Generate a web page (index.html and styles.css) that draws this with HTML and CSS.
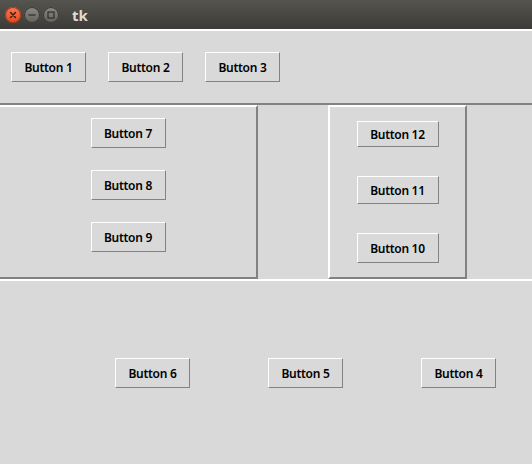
FILE: index.html
```html
<!DOCTYPE html>
<html lang="en">
<head>
    <meta charset="UTF-8">
    <meta name="viewport" content="width=device-width, initial-scale=1.0">
    <title>tk</title>
    <link rel="stylesheet" href="styles.css">
</head>
<body>
    <div class="titlebar">
        <span class="wbtn close">
            <svg width="16" height="16" viewBox="0 0 16 16">
                <path d="M5.5 5.5 L10.5 10.5 M10.5 5.5 L5.5 10.5" stroke="#3a1a10" stroke-width="1.4" stroke-linecap="round"/>
            </svg>
        </span>
        <span class="wbtn">
            <svg width="16" height="16" viewBox="0 0 16 16">
                <path d="M4.5 8 H11.5" stroke="#2e2d2a" stroke-width="1.2"/>
            </svg>
        </span>
        <span class="wbtn">
            <svg width="16" height="16" viewBox="0 0 16 16">
                <rect x="5" y="5" width="6" height="6" fill="none" stroke="#2e2d2a" stroke-width="1.2"/>
            </svg>
        </span>
        <span class="title">tk</span>
    </div>

    <div class="top-frame">
        <button class="btn">Button 1</button>
        <button class="btn">Button 2</button>
        <button class="btn">Button 3</button>
    </div>

    <div class="middle">
        <div class="left-frame">
            <button class="btn">Button 7</button>
            <button class="btn">Button 8</button>
            <button class="btn">Button 9</button>
        </div>
        <div class="right-frame">
            <button class="btn wide short">Button 12</button>
            <button class="btn wide mid">Button 11</button>
            <button class="btn wide">Button 10</button>
        </div>
    </div>

    <div class="bottom-frame">
        <button class="btn">Button 6</button>
        <button class="btn">Button 5</button>
        <button class="btn">Button 4</button>
    </div>
</body>
</html>
```

FILE: styles.css
```css
body {
    margin: 0;
    width: 532px;
    height: 464px;
    overflow: hidden;
    background-color: #d9d9d9;
    font-family: "Noto Sans", sans-serif;
}
.titlebar {
    height: 29px;
    display: flex;
    align-items: center;
    gap: 3px;
    padding-left: 5px;
    background: linear-gradient(#55544f, #3c3b37);
}
.wbtn {
    width: 16px;
    height: 16px;
    border-radius: 50%;
    background: linear-gradient(#8a8984, #62615c);
    box-shadow: inset 0 0 0 1px #3a3935;
    display: flex;
}
.wbtn.close {
    background: linear-gradient(#f77a52, #df4a1f);
    box-shadow: inset 0 0 0 1px #a8351a;
}
.title {
    margin-left: 10px;
    color: #dfdbd2;
    font-weight: bold;
    font-size: 15px;
}
.btn {
    width: 75px;
    height: 30px;
    box-sizing: border-box;
    padding: 0;
    border: 1px solid;
    border-color: #ffffff #828282 #828282 #ffffff;
    background-color: #d9d9d9;
    color: #000;
    font-family: "Noto Sans", sans-serif;
    font-weight: 600;
    font-size: 12px;
    letter-spacing: -0.3px;
}
.btn.wide {
    width: 82px;
}
.btn.short {
    height: 26px;
}
.btn.mid {
    height: 28px;
}
.top-frame {
    height: 76px;
    box-sizing: border-box;
    border-top: 2px solid #ffffff;
    border-bottom: 2px solid #828282;
    display: flex;
    align-items: center;
    gap: 22px;
    padding-left: 11px;
}
.middle {
    display: flex;
    height: 174px;
}
.left-frame {
    width: 258px;
    box-sizing: border-box;
    border-top: 2px solid #ffffff;
    border-right: 2px solid #828282;
    border-bottom: 2px solid #828282;
    display: flex;
    flex-direction: column;
    align-items: center;
    gap: 22px;
    padding-top: 11px;
}
.right-frame {
    width: 139px;
    margin-left: 70px;
    box-sizing: border-box;
    border: 2px solid;
    border-color: #ffffff #828282 #828282 #ffffff;
    display: flex;
    flex-direction: column;
    align-items: center;
    gap: 29px;
    padding-top: 14px;
}
.bottom-frame {
    height: 185px;
    box-sizing: border-box;
    border-top: 2px solid #ffffff;
    display: flex;
    justify-content: flex-end;
    align-items: center;
    gap: 78px;
    padding-top: 1px;
    padding-right: 36px;
}
```
